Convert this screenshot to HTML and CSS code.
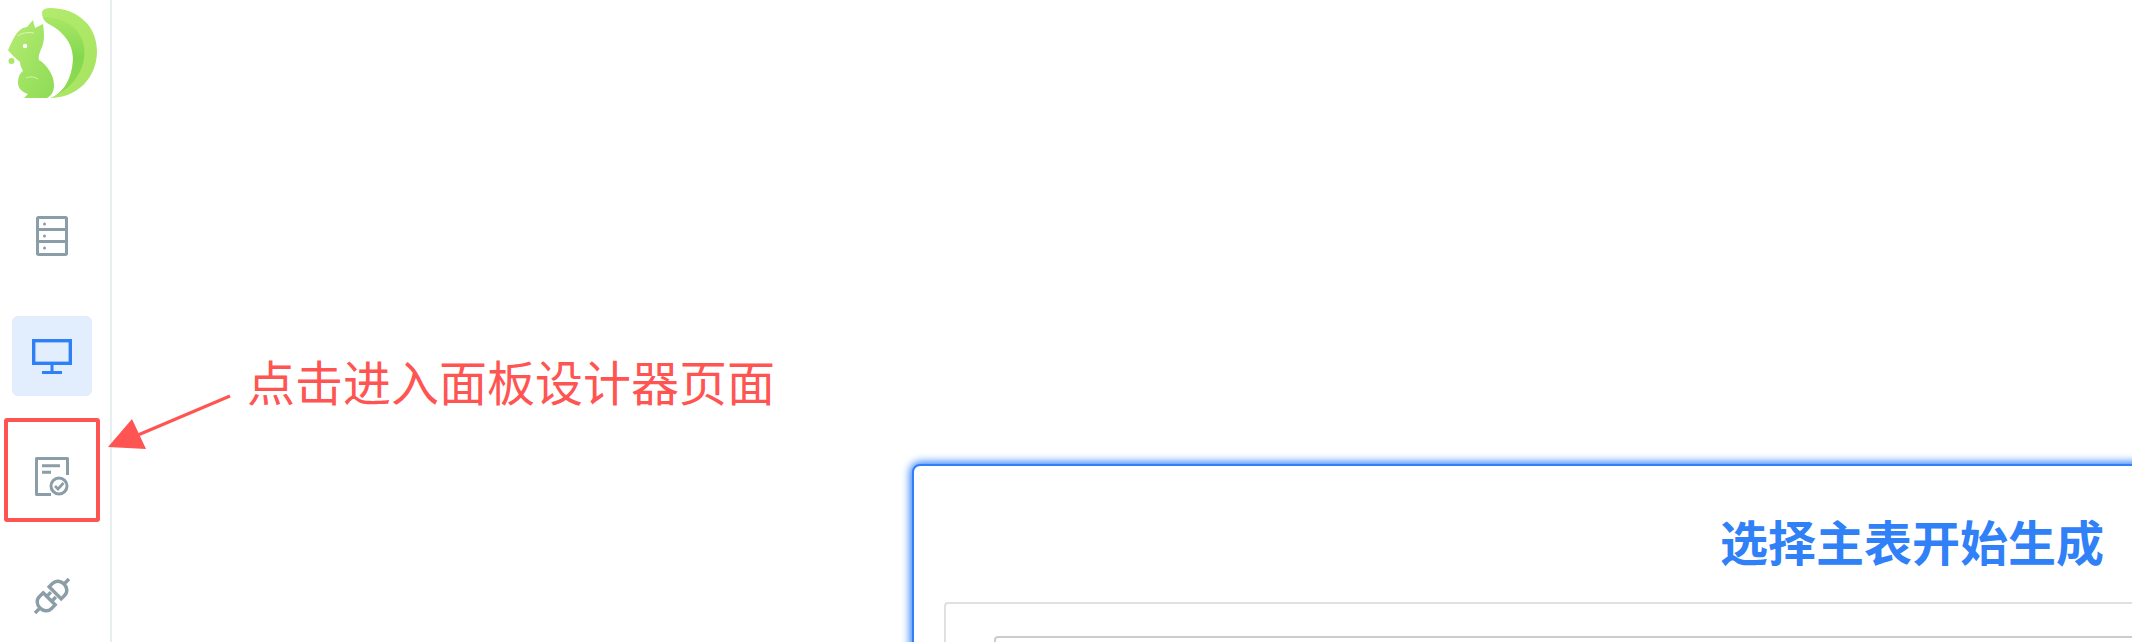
FILE: index.html
```html
<!DOCTYPE html>
<html lang="zh-CN">
<head>
<meta charset="utf-8">
<title>面板设计器</title>
<link rel="stylesheet" href="styles.css">
</head>
<body>
<div class="app">
  <aside class="sidebar">
    <div class="logo">
      <svg width="104" height="104" viewBox="0 0 104 104">
        <defs>
          <linearGradient id="tailOuter" x1="0" y1="0" x2="1" y2="1">
            <stop offset="0" stop-color="#b4ec6e"/>
            <stop offset="1" stop-color="#a6e35f"/>
          </linearGradient>
          <linearGradient id="tailInner" x1="0" y1="0" x2="0" y2="1">
            <stop offset="0" stop-color="#a9e766"/>
            <stop offset="0.5" stop-color="#84d84f"/>
            <stop offset="1" stop-color="#8fdc55"/>
          </linearGradient>
          <linearGradient id="body" x1="0" y1="0" x2="1" y2="1">
            <stop offset="0" stop-color="#b6ec72"/>
            <stop offset="1" stop-color="#8edb56"/>
          </linearGradient>
        </defs>
        <path fill="url(#tailOuter)" d="M42 13C42 9 46 8 52 8C79 9 97 27 97 51C97 78 77 98 50 98C64 94 73 76 73 58C73 42 61 30 49 24C45 22 42 18 42 13Z"/>
        <path fill="url(#tailInner)" d="M43 17C58 16 78 24 83 42C89 64 76 88 50 98C64 94 73 76 73 58C73 42 61 30 49 24C46 22 44 20 43 17Z"/>
        <path fill="url(#body)" d="M8 50C11 44 13 38 17 33C20 29 24 27 27 27L33 20L35 28L43 24C44 32 45 40 42 47C40 52 38 56 39 60C47 65 54 75 54 85C54 92 51 96 47 98H24L28 94C22 92 18 88 18 83C18 77 20 73 23 71C21 67 20 65 20 62C15 58 11 54 8 50Z"/>
        <circle cx="11.500" cy="61" r="3" fill="#a9e766"/>
        <path d="M18 36C21 33 27 32 34 33" fill="none" stroke="#dff7bf" stroke-width="1"/>
        <circle cx="25" cy="46" r="2.200" fill="#fff"/>
        <path d="M26 78C30 76 35 77 38 79" fill="none" stroke="#d6f4ae" stroke-width="1"/>
      </svg>
    </div>
    <nav class="nav">
      <a class="nav-item">
        <svg class="icon" width="48" height="48" viewBox="0 0 48 48">
          <rect x="9.500" y="5.500" width="29" height="37" rx="1" fill="none" stroke="#8b9ea8" stroke-width="3"/>
          <path d="M9 17.500H39M9 29.500H39" stroke="#8b9ea8" stroke-width="3"/>
          <circle cx="16.500" cy="12" r="1.500" fill="#8b9ea8"/>
          <circle cx="16.500" cy="24" r="1.500" fill="#8b9ea8"/>
          <circle cx="16.500" cy="36" r="1.500" fill="#8b9ea8"/>
        </svg>
      </a>
      <a class="nav-item nav-item-active">
        <svg class="icon" width="48" height="48" viewBox="0 0 48 48">
          <rect x="5.700" y="8.700" width="36.600" height="22.600" fill="none" stroke="#2f80f8" stroke-width="3.400"/>
          <path d="M24 32V41" stroke="#2f80f8" stroke-width="3"/>
          <path d="M14 40.500H34" stroke="#2f80f8" stroke-width="3"/>
        </svg>
      </a>
      <a class="nav-item">
        <svg class="icon" width="48" height="48" viewBox="0 0 48 48">
          <path d="M23 42.500H8.500V6.500H39.500V23" fill="none" stroke="#8b9ea8" stroke-width="3" stroke-linejoin="round"/>
          <path d="M14 13.700H32M14 20.300H23" stroke="#8b9ea8" stroke-width="3"/>
          <circle cx="31" cy="34" r="8" fill="none" stroke="#8b9ea8" stroke-width="3"/>
          <path d="M27 34L30 37L35.500 31" fill="none" stroke="#8b9ea8" stroke-width="2.600"/>
        </svg>
      </a>
      <a class="nav-item">
        <svg class="icon" width="48" height="48" viewBox="0 0 48 48">
          <g transform="rotate(-45 24 24)" fill="none" stroke="#8b9ea8" stroke-width="3.400">
            <path d="M0 24H7"/>
            <path d="M20 15.500V32.500H14.500C10 32.500 7 28.500 7 24C7 19.500 10 15.500 14.500 15.500Z"/>
            <path d="M20 20.500H26M20 27.500H26"/>
            <path d="M28.500 15.500V32.500H33.500C38 32.500 41 28.500 41 24C41 19.500 38 15.500 33.500 15.500Z"/>
            <path d="M41 24H48"/>
          </g>
        </svg>
      </a>
    </nav>
  </aside>
  <main class="main">
    <section class="card">
      <h1 class="card-title">选择主表开始生成</h1>
      <div class="form-box">
        <div class="form-input"></div>
      </div>
    </section>
  </main>
</div>
<div class="highlight"></div>
<svg class="arrow" width="124" height="56" viewBox="0 0 124 56">
  <path d="M30 40L122 1" stroke="#ff5552" stroke-width="3"/>
  <path d="M24 24L38 54L0 52Z" fill="#ff5552"/>
</svg>
<div class="annotation">点击进入面板设计器页面</div>
</body>
</html>
```
FILE: styles.css
```css
* {
  box-sizing: border-box;
}

html,
body {
  margin: 0;
  height: 100%;
  background: #fff;
  overflow: hidden;
  font-family: "Noto Sans CJK SC", "Noto Sans", sans-serif;
}

.app {
  display: flex;
  height: 642px;
  overflow: hidden;
}

.sidebar {
  flex: 0 0 112px;
  border-right: 2px solid #e8eef0;
  padding-left: 12px;
}

.logo {
  margin-left: -12px;
  height: 156px;
}

.logo svg {
  display: block;
}

.nav {
  display: flex;
  flex-direction: column;
  gap: 40px;
  margin-top: 40px;
}

.nav-item {
  display: flex;
  align-items: center;
  justify-content: center;
  width: 80px;
  height: 80px;
  border-radius: 6px;
}

.nav-item-active {
  background: #e2eefd;
}

.icon {
  display: block;
}

.main {
  flex: 1;
  padding: 464px 0 0 800px;
  min-width: 0;
}

.card {
  width: 2000px;
  height: 600px;
  border: 2px solid #2f80f8;
  border-radius: 8px;
  box-shadow: 0 0 8px 2px #2f80f8;
  background: #fff;
  padding: 42px 30px 0;
}

.card-title {
  margin: 0 0 30px;
  font-size: 48px;
  line-height: 64px;
  font-weight: 700;
  color: #3080f8;
  text-align: center;
}

.form-box {
  height: 300px;
  border: 2px solid #e0e0e0;
  border-radius: 4px;
  padding: 32px 0 0 48px;
}

.form-input {
  width: 1800px;
  height: 60px;
  border: 2px solid #ccc;
  border-radius: 4px;
}

.highlight {
  position: absolute;
  left: 4px;
  top: 418px;
  width: 96px;
  height: 104px;
  border: 4px solid #ff5552;
  border-radius: 3px;
}

.arrow {
  position: absolute;
  left: 108px;
  top: 395px;
  overflow: visible;
}

.annotation {
  position: absolute;
  left: 247px;
  top: 348px;
  font-size: 48px;
  line-height: 64px;
  color: #ff5552;
  white-space: nowrap;
}
```
